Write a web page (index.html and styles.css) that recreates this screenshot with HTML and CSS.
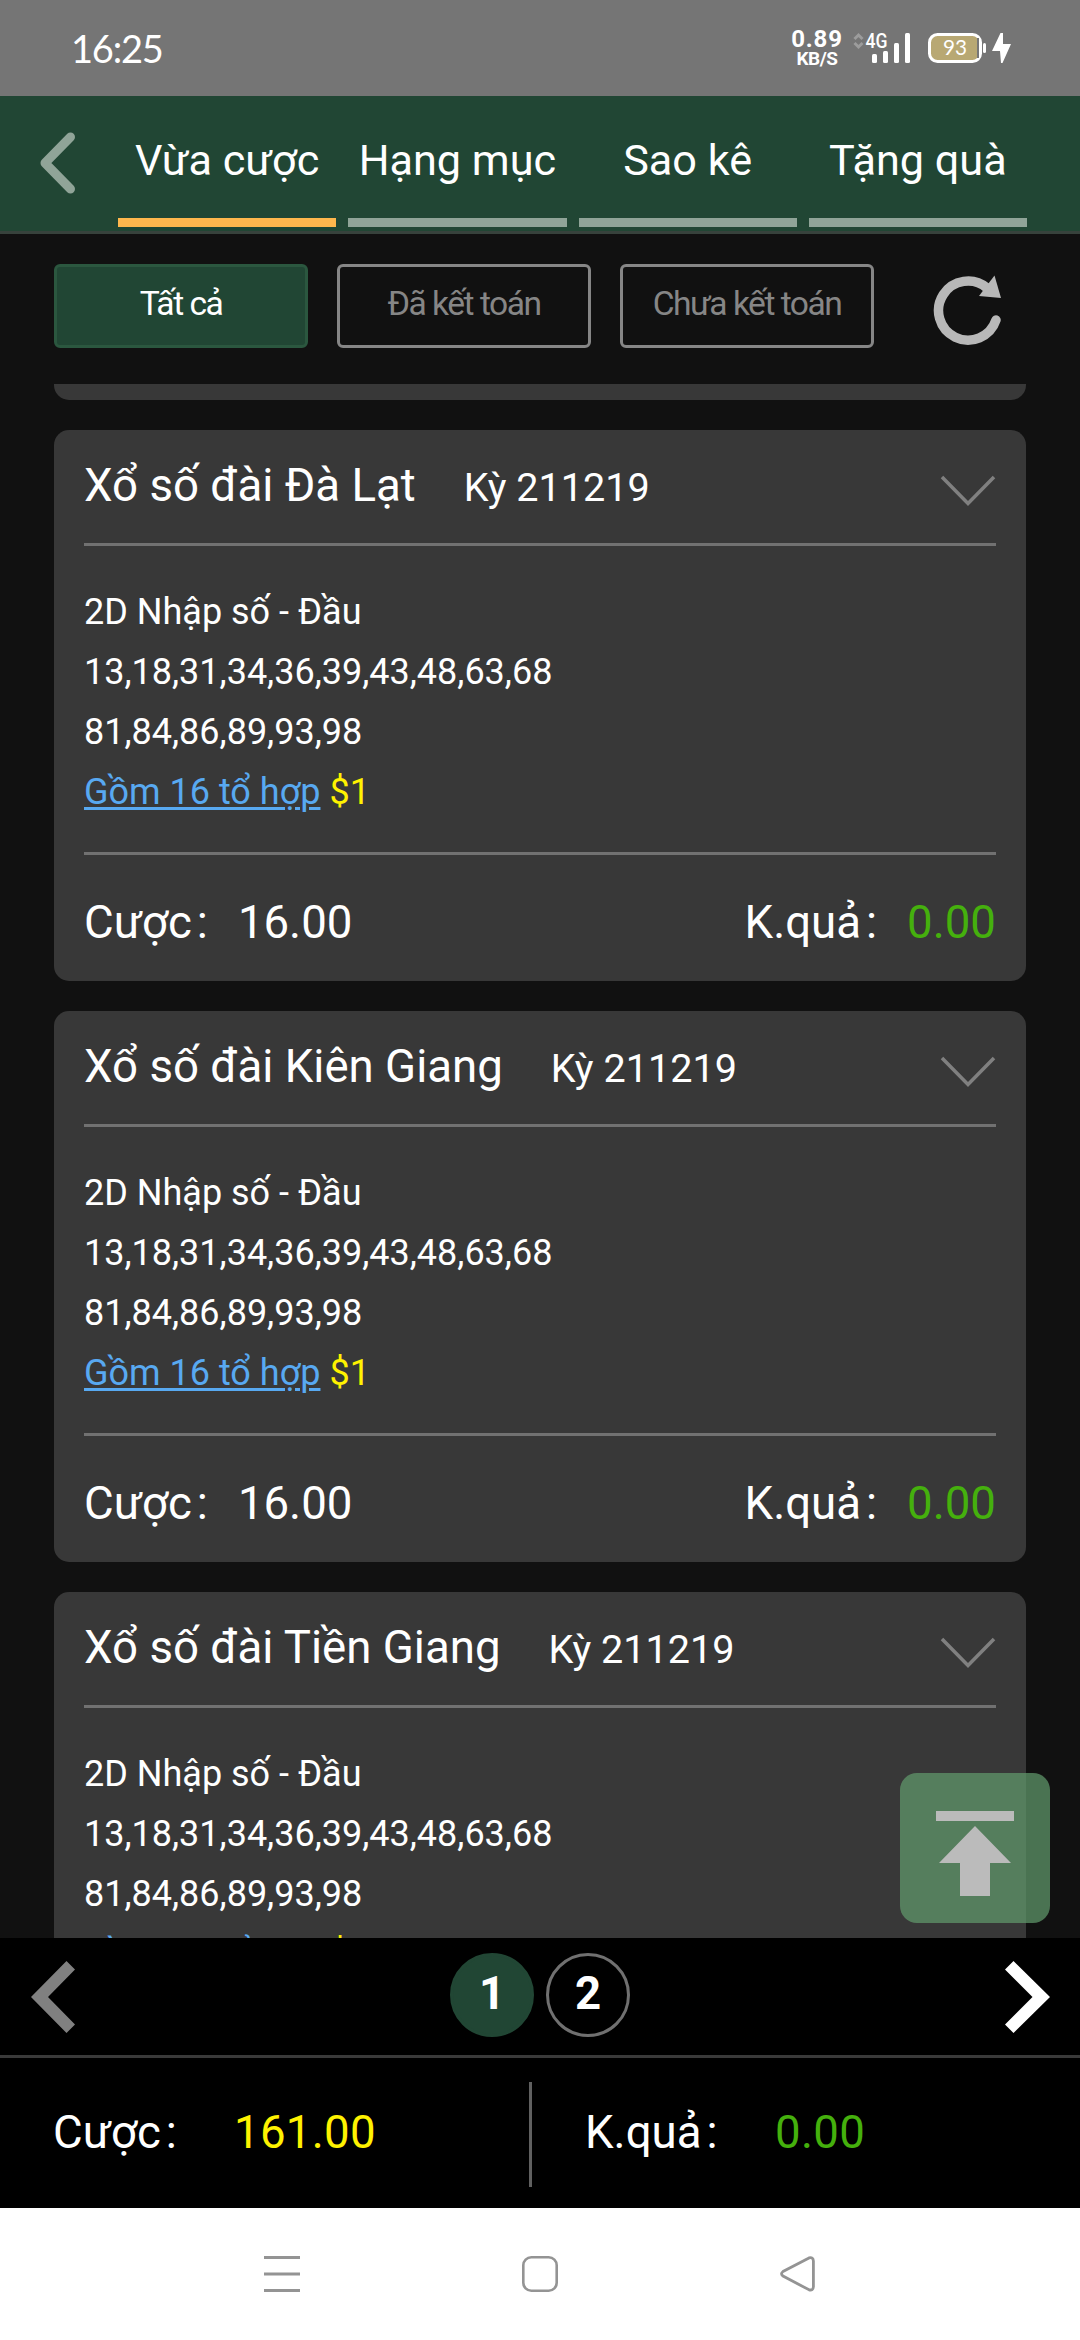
FILE: index.html
```html
<!DOCTYPE html>
<html lang="vi">
<head>
<meta charset="utf-8">
<title>Vừa cược</title>
<link rel="stylesheet" href="styles.css">
</head>
<body>
<div class="screen">
  <div class="status">
    <span class="clock">16:25</span>
    <span class="speed"><b class="rate">0.89</b><b class="unit">KB/S</b></span>
    <svg class="signal" width="58" height="34" viewBox="0 0 58 34">
      <path d="M2.5 8 6.5 4l4 4M2.5 12l4 4 4-4" fill="none" stroke="#9c9c9c" stroke-width="3"/>
      <text x="13.5" y="17" class="net" textLength="22" lengthAdjust="spacingAndGlyphs">4G</text>
      <g fill="#fff"><rect x="20" y="23" width="5" height="9" rx="1.5"/><rect x="31" y="20" width="5" height="12" rx="1.5"/><rect x="42" y="12" width="5" height="20" rx="1.5"/><rect x="53" y="2" width="5" height="30" rx="1.5"/></g>
    </svg>
    <svg class="battery" width="84" height="34" viewBox="0 0 84 34">
      <rect x="1.5" y="3.5" width="51" height="27" rx="8" fill="#b8a873" stroke="#fff" stroke-width="3"/>
      <rect x="49" y="7" width="2" height="20" fill="#777"/>
      <rect x="55" y="12" width="3" height="10" rx="1.5" fill="#fff"/>
      <text x="15" y="24" class="level" textLength="24" lengthAdjust="spacingAndGlyphs">93</text>
      <path d="M72.500 2 64 20h8l1 12h1.500L83 13h-8V2z" fill="#fff"/>
    </svg>
  </div>

  <header class="header">
    <svg class="back" width="38" height="64" viewBox="0 0 38 64"><path d="M31.500 6 6 32l25.500 26" fill="none" stroke="#90a498" stroke-width="9" stroke-linecap="round" stroke-linejoin="round"/></svg>
    <nav class="tabs">
      <a class="tab active">Vừa cược</a>
      <a class="tab">Hạng mục</a>
      <a class="tab">Sao kê</a>
      <a class="tab">Tặng quà</a>
    </nav>
  </header>

  <div class="filters">
    <button class="filter on">Tất cả</button>
    <button class="filter">Đã kết toán</button>
    <button class="filter">Chưa kết toán</button>
    <svg class="reload" width="70" height="72" viewBox="0 0 70 72">
      <path d="M64 46A29.500 29.500 0 1 1 55 14" fill="none" stroke="#b8b8b8" stroke-width="9.500" stroke-linecap="round"/>
      <path d="M62.500 1.500 69 24 47 22z" fill="#b8b8b8"/>
    </svg>
  </div>

  <main class="list">
    <div class="card tail"></div>
    <section class="card">
      <div class="head"><h2>Xổ số đài Đà Lạt</h2><span class="term">Kỳ 211219</span><svg class="chev" width="56" height="32" viewBox="0 0 56 32"><path d="M2 2 28 28.500 54 2" fill="none" stroke="#808080" stroke-width="3.500"/></svg></div>
      <div class="bet"><p>2D Nhập số - Đầu</p><p>13,18,31,34,36,39,43,48,63,68</p><p>81,84,86,89,93,98</p><p><a class="combo">Gồm 16 tổ hợp</a> <span class="stake">$1</span></p></div>
      <div class="sum"><span>Cược<span class="colon">:</span>16.00</span><span>K.quả<span class="colon">:</span><em>0.00</em></span></div>
    </section>
    <section class="card">
      <div class="head"><h2>Xổ số đài Kiên Giang</h2><span class="term">Kỳ 211219</span><svg class="chev" width="56" height="32" viewBox="0 0 56 32"><path d="M2 2 28 28.500 54 2" fill="none" stroke="#808080" stroke-width="3.500"/></svg></div>
      <div class="bet"><p>2D Nhập số - Đầu</p><p>13,18,31,34,36,39,43,48,63,68</p><p>81,84,86,89,93,98</p><p><a class="combo">Gồm 16 tổ hợp</a> <span class="stake">$1</span></p></div>
      <div class="sum"><span>Cược<span class="colon">:</span>16.00</span><span>K.quả<span class="colon">:</span><em>0.00</em></span></div>
    </section>
    <section class="card">
      <div class="head"><h2>Xổ số đài Tiền Giang</h2><span class="term">Kỳ 211219</span><svg class="chev" width="56" height="32" viewBox="0 0 56 32"><path d="M2 2 28 28.500 54 2" fill="none" stroke="#808080" stroke-width="3.500"/></svg></div>
      <div class="bet"><p>2D Nhập số - Đầu</p><p>13,18,31,34,36,39,43,48,63,68</p><p>81,84,86,89,93,98</p><p><a class="combo">Gồm 16 tổ hợp</a> <span class="stake">$1</span></p></div>
    </section>
    <div class="totop"><svg width="150" height="150" viewBox="0 0 150 150"><path d="M36 38h78v10H36zM75 53l36 37H90v33H60V90H39z" fill="#bbb"/></svg></div>
  </main>

  <div class="pager">
    <svg width="44" height="72" viewBox="0 0 44 72"><path d="M35.500 0 44 8.500 17 36l27 27.500-8.500 8.500L0 36z" fill="#808080"/></svg>
    <div class="pages"><b class="page current">1</b><b class="page">2</b></div>
    <svg width="45" height="72" viewBox="0 0 45 72"><path d="M8.500 0 0 8.500 27.500 36 0 63.500 8.500 72 45 36z" fill="#fff"/></svg>
  </div>

  <footer class="totals">
    <div class="total first"><span class="label">Cược<span class="colon">:</span></span><span class="amount bet-total">161.00</span></div>
    <div class="total second"><span class="label">K.quả<span class="colon">:</span></span><em class="amount">0.00</em></div>
  </footer>

  <div class="sysnav">
    <svg width="36" height="36" viewBox="0 0 36 36"><path d="M0 1.500h36M0 18h36M0 34.500h36" stroke="#949494" stroke-width="3"/></svg>
    <svg width="36" height="36" viewBox="0 0 36 36"><rect x="1.300" y="1.300" width="33.400" height="33.400" rx="8" fill="none" stroke="#949494" stroke-width="2.600"/></svg>
    <svg width="36" height="36" viewBox="0 0 36 36"><path d="M29 1.900 3 15.500q-3 2.300 0 4.600L29 33.800q4.200 1 4.400-3V5q-.2-4.100-4.400-3.100z" fill="none" stroke="#949494" stroke-width="2.800"/></svg>
  </div>
</div>
</body>
</html>
```
FILE: styles.css
```css
* { box-sizing: border-box; }
body, h2, p { margin: 0; }
body { font-family: Roboto, "Noto Sans", sans-serif; color: #fff; background: #111; }
svg { display: block; flex: none; }
em { font-style: normal; color: #45b00d; }
.screen { width: 1080px; height: 2340px; display: flex; flex-direction: column; overflow: hidden; }

.status { height: 96px; background: #757575; display: flex; align-items: flex-start; padding-left: 71px; }
.clock { font: 38px/48px Lato, sans-serif; letter-spacing: -1.2px; margin-top: 24px; width: 720px; }
.speed { width: 52px; display: flex; flex-direction: column; align-items: center; margin-top: 27px; }
.rate { font-size: 24px; line-height: 24px; letter-spacing: .8px; }
.unit { font-size: 19px; line-height: 16px; letter-spacing: -.5px; }
.signal { margin: 31px 0 0 9px; }
.net { font: 500 20px Roboto, sans-serif; fill: #fff; }
.battery { margin: 31px 0 0 18px; }
.level { font: 21px Lato, sans-serif; fill: #fff; }

.header { height: 138px; background: #214634; border-bottom: 3px solid #37423c; display: flex; padding-left: 39px; }
.back { margin: 35px 41px 0 0; }
.tabs { width: 909px; height: 131px; display: grid; grid-template-columns: repeat(4, 1fr); gap: 12px; }
.tab { padding-top: 8px; border-bottom: 9px solid #90a498; text-align: center; font-size: 43.2px; line-height: 114px; white-space: nowrap; }
.active { border-color: #ffb74d; }

.filters { height: 150px; padding: 30px 54px 0; display: flex; gap: 29px; }
.filter { width: 254px; height: 84px; padding: 0 0 4px; border: 3px solid #868686; border-radius: 6px; background: none; color: #868686; font: 33.6px/74px Roboto, sans-serif; letter-spacing: -1.5px; white-space: nowrap; }
.on { background: #214634; border-color: #2b573f; color: #fff; }
.reload { margin: 10px 0 0 29px; }

.list { height: 1554px; overflow: hidden; position: relative; display: flex; flex-direction: column; gap: 30px; padding: 0 54px; }
.card { width: 972px; height: 551px; flex: none; background: #383838; border-radius: 15px; padding: 0 30px; }
.tail { height: 16px; border-radius: 0 0 15px 15px; }
.head { height: 116px; border-bottom: 3px solid #717171; display: flex; align-items: baseline; line-height: 111px; white-space: nowrap; }
.head h2 { font-size: 45.6px; font-weight: 400; }
.term { font-size: 39.6px; margin-left: 48px; }
.chev { align-self: flex-start; margin: 45px 0 0 auto; }
.bet { height: 309px; padding-top: 36px; border-bottom: 3px solid #717171; font-size: 36px; line-height: 60px; }
.combo { color: #58a9f1; text-decoration: underline; text-decoration-thickness: 3px; text-underline-offset: 3px; }
.stake { color: #fff200; }
.sum { display: flex; justify-content: space-between; font-size: 45.6px; line-height: 135px; }
.colon { margin: 0 30px 0 5px; }

.totop { position: absolute; left: 900px; top: 1389px; border-radius: 17px; background: rgba(99, 157, 110, .7); }

.pager { height: 120px; background: #000; border-bottom: 3px solid #3a3a3a; display: flex; justify-content: space-between; align-items: center; padding: 0 30px 0 31px; }
.pages { display: flex; gap: 12px; margin-top: -3px; }
.page { width: 84px; height: 84px; border: 3px solid #707070; border-radius: 50%; text-align: center; font-size: 45.6px; line-height: 75px; }
.current { background: #214634; border-color: #214634; }

.totals { height: 150px; background: #000; display: flex; padding-top: 24px; font-size: 45.6px; line-height: 101px; }
.total { display: flex; height: 105px; white-space: nowrap; }
.first { width: 532px; padding-left: 53px; border-right: 3px solid #606060; }
.second { padding-left: 53px; }
.first .label { width: 181px; }
.second .label { width: 190px; }
.amount { letter-spacing: .3px; }
.bet-total { color: #fff200; }

.sysnav { height: 132px; background: #fff; display: flex; justify-content: center; gap: 222px; padding-top: 48px; }
```
